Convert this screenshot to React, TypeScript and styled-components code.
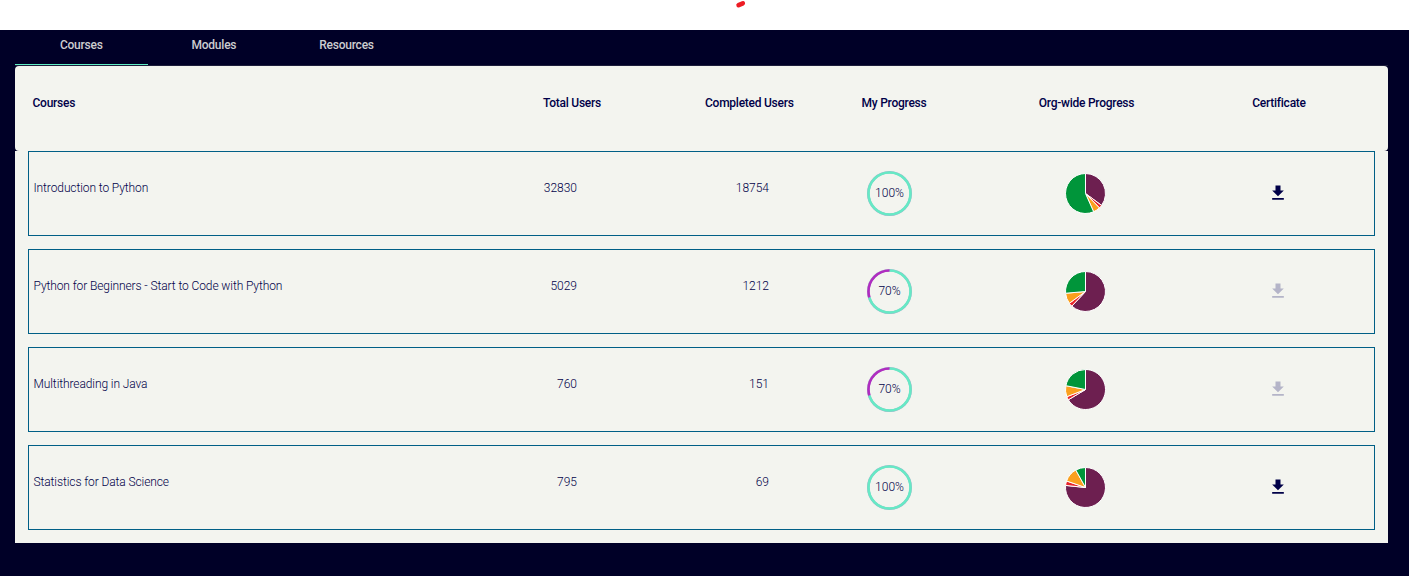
import React from 'react';
import styled, { createGlobalStyle } from 'styled-components';

const GlobalStyle = createGlobalStyle`
  *, *::before, *::after { box-sizing: border-box; }
  body {
    margin: 0;
    background: #fff;
    font-family: Roboto, 'Liberation Sans', sans-serif;
    font-size: 12px;
    line-height: 16px;
    color: #000048;
  }
`;

const TopStrip = styled.div`
  height: 30px;
  display: flex;
  justify-content: center;
  padding-left: 73px;
  svg { display: block; }
`;

const Page = styled.main`
  height: 546px;
  padding: 0 21px 0 15px;
  background: #000027;
`;

const TabBar = styled.nav`
  display: flex;
  height: 36px;
  border-bottom: 1px solid #1d1d3b;
`;

const Tab = styled.button<{ $active?: boolean }>`
  width: 132.6px;
  padding: 0 0 5px;
  border: 0;
  border-bottom: 1px solid ${p => (p.$active ? '#5eedc4' : 'transparent')};
  background: none;
  font: 500 12px/16px Roboto, sans-serif;
  letter-spacing: -0.22px;
  color: #cdcdd0;
`;

const Panel = styled.section`
  height: 477px;
  background: linear-gradient(#000027 86px, #f3f4ef 86px);
`;

const columns = '514px 162px 86px 197px 195px 1fr';

const HeaderRow = styled.div`
  display: grid;
  grid-template-columns: ${columns};
  align-items: center;
  height: 85px;
  padding: 0 14px 11px 14px;
  border-radius: 4px;
  background: #f3f4ef;
`;

const HeaderCell = styled.div<{ $align?: string; $shift?: number }>`
  font-weight: 500;
  letter-spacing: -0.25px;
  white-space: nowrap;
  text-align: ${p => p.$align || 'left'};
  padding-left: ${p => p.$shift || 0}px;
`;

const Rows = styled.div`
  display: flex;
  flex-direction: column;
  gap: 13px;
  height: 392px;
  padding: 0 13px;
  background: #f3f4ef;
`;

const Row = styled.div`
  display: grid;
  grid-template-columns: ${columns};
  align-items: center;
  height: 85px;
  border: 1px solid #005f86;
  font-weight: 300;
`;

const NameCell = styled.div`
  padding: 0 0 12px 4.5px;
  letter-spacing: -0.1px;
`;

const NumberCell = styled.div<{ $end: number }>`
  padding: 0 ${p => p.$end}px 12px 0;
  text-align: right;
`;

const GraphicCell = styled.div`
  display: flex;
  justify-content: center;
  svg { display: block; }
`;

const RingBox = styled.div`
  display: grid;
  place-items: center;
  width: 45px;
  height: 45px;
  > * { grid-area: 1 / 1; }
  span { padding-bottom: 1px; }
`;

function Ring({ value }: { value: number }) {
  const circumference = 2 * Math.PI * 21;
  const done = (circumference * value) / 100;
  return (
    <RingBox>
      <svg width="45" height="45" viewBox="0 0 45 45" fill="none">
        <circle cx="22.5" cy="22.5" r="21.2" stroke="#a8b0cc" strokeWidth="2.6" />
        <g strokeWidth="2.6" transform="rotate(-90 22.5 22.5)">
          <circle cx="22.5" cy="22.5" r="21" stroke="#66e9c5" strokeDasharray={`${done} ${circumference}`} />
          {value < 100 && (
            <circle
              cx="22.5"
              cy="22.5"
              r="21"
              stroke="#b02cc0"
              strokeDasharray={`${circumference - done} ${circumference}`}
              strokeDashoffset={-done}
            />
          )}
        </g>
      </svg>
      <span>{value}%</span>
    </RingBox>
  );
}

const pieColors = ['#6d1f50', '#e8252b', '#faa01e', '#00953a'];

function Pie({ stops }: { stops: number[] }) {
  const point = (deg: number) => {
    const a = (deg * Math.PI) / 180;
    return `${20.5 + 20 * Math.sin(a)} ${20.5 - 20 * Math.cos(a)}`;
  };
  const edges = [0, ...stops, 360];
  return (
    <svg width="41" height="41" viewBox="0 0 41 41">
      {pieColors.map((color, i) => (
        <path
          key={color}
          d={`M20.5 20.5L${point(edges[i])}A20 20 0 ${edges[i + 1] - edges[i] > 180 ? 1 : 0} 1 ${point(edges[i + 1])}Z`}
          fill={color}
          stroke="#fff"
          strokeWidth="1"
        />
      ))}
    </svg>
  );
}

const DownloadIcon = styled.svg<{ $enabled: boolean }>`
  margin: 0 0.6px 1px 0;
  fill: ${p => (p.$enabled ? '#000048' : '#b4b4c8')};
`;

const courses = [
  { name: 'Introduction to Python', total: 32830, completed: 18754, progress: 100, stops: [126.5, 136, 156] },
  { name: 'Python for Beginners - Start to Code with Python', total: 5029, completed: 1212, progress: 70, stops: [223, 234, 265] },
  { name: 'Multithreading in Java', total: 760, completed: 151, progress: 70, stops: [239, 249, 281] },
  { name: 'Statistics for Data Science', total: 795, completed: 69, progress: 100, stops: [276, 289, 331] },
];

export default function App() {
  return (
    <>
      <GlobalStyle />
      <TopStrip>
        <svg width="12" height="10" viewBox="0 0 12 10">
          <path d="M3.6 5.2L7.8 3.3" stroke="#ed1c24" strokeWidth="4.6" strokeLinecap="round" />
        </svg>
      </TopStrip>
      <Page>
        <TabBar>
          <Tab $active>Courses</Tab>
          <Tab>Modules</Tab>
          <Tab>Resources</Tab>
        </TabBar>
        <Panel>
          <HeaderRow>
            <HeaderCell $shift={3.5}>Courses</HeaderCell>
            <HeaderCell>Total Users</HeaderCell>
            <HeaderCell>Completed Users</HeaderCell>
            <HeaderCell $align="center" $shift={9}>My Progress</HeaderCell>
            <HeaderCell $align="center" $shift={2}>Org-wide Progress</HeaderCell>
            <HeaderCell $align="center" $shift={1}>Certificate</HeaderCell>
          </HeaderRow>
          <Rows>
            {courses.map(c => (
              <Row key={c.name}>
                <NameCell>{c.name}</NameCell>
                <NumberCell $end={128}>{c.total}</NumberCell>
                <NumberCell $end={22}>{c.completed}</NumberCell>
                <GraphicCell>
                  <Ring value={c.progress} />
                </GraphicCell>
                <GraphicCell>
                  <Pie stops={c.stops} />
                </GraphicCell>
                <GraphicCell>
                  <DownloadIcon $enabled={c.progress === 100} width="20" height="20" viewBox="0 0 24 24">
                    <path d="M19 9h-4V3H9v6H5l7 7 7-7zM5 18v2h14v-2H5z" />
                  </DownloadIcon>
                </GraphicCell>
              </Row>
            ))}
          </Rows>
        </Panel>
      </Page>
    </>
  );
}
